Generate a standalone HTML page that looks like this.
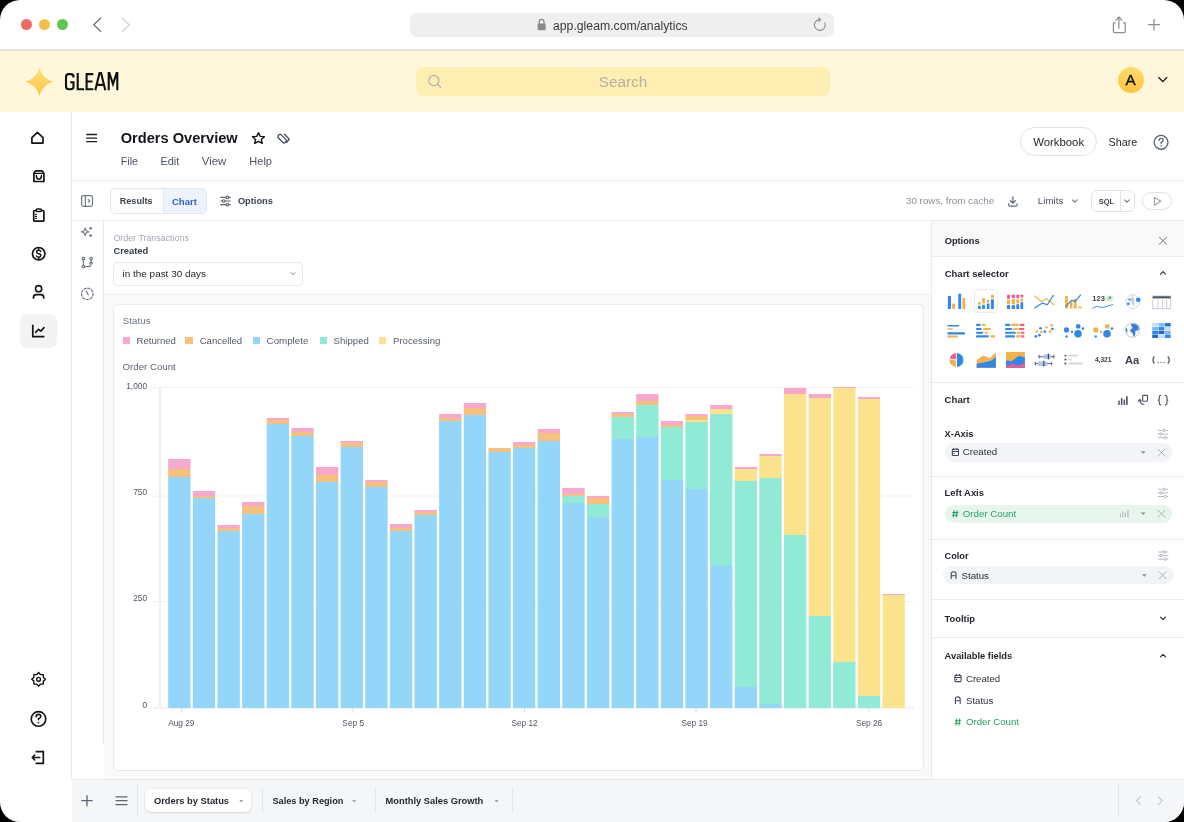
<!DOCTYPE html>
<html><head><meta charset="utf-8">
<style>
html,body{margin:0;padding:0;width:1184px;height:822px;overflow:hidden;background:#000;}
#app{position:absolute;left:0;top:0;width:1184px;height:822px;border-radius:20px;overflow:hidden;will-change:transform;font-family:"Liberation Sans",sans-serif;}
.a{position:absolute;box-sizing:border-box;}
.t{position:absolute;white-space:pre;line-height:1;font-family:"Liberation Sans",sans-serif;}
svg.i{position:absolute;overflow:visible;}
</style></head><body>
<div id="app">
<div class="a" style="left:0;top:0;width:1184px;height:822px;background:#fff"></div>
<!-- browser chrome -->
<div class="a" style="left:0;top:49px;width:1184px;height:2px;background:#e2e2e2"></div>
<div class="a" style="left:21px;top:19.1px;width:11px;height:11px;border-radius:50%;background:#ec6a5e"></div>
<div class="a" style="left:38.8px;top:19.1px;width:11px;height:11px;border-radius:50%;background:#f4bf4f"></div>
<div class="a" style="left:56.7px;top:19.1px;width:11px;height:11px;border-radius:50%;background:#61c554"></div>
<svg class="i" style="left:0;top:0" width="1" height="1">
 <polyline points="101,17.8 93.8,24.8 101,31.8" fill="none" stroke="#6e6e6e" stroke-width="1.25"/>
 <polyline points="122,17.8 129.2,24.8 122,31.8" fill="none" stroke="#d2d2d2" stroke-width="1.25"/>
</svg>
<div class="a" style="left:409.5px;top:12.5px;width:424.5px;height:24.5px;border-radius:7px;background:#efefef"></div>
<svg class="i" style="left:0;top:0" width="1" height="1">
 <path d="M539.2,24 v-2.2 a2.4,2.4 0 0 1 4.8,0 v2.2" fill="none" stroke="#8a8a8a" stroke-width="1.3"/>
 <rect x="537.6" y="23.6" width="8" height="6.6" rx="1" fill="#8a8a8a"/>
 <path d="M824.6,22.5 A5.4,5.4 0 1 1 819.7,19.6" fill="none" stroke="#8f8f8f" stroke-width="1.1"/>
 <polyline points="818.2,17.7 820.6,19.6 818.6,21.9" fill="none" stroke="#8f8f8f" stroke-width="1.1"/>
 <path d="M1115.6,22.9 h-2.2 v8.6 q0,1.1 1.1,1.1 h9.6 q1.1,0 1.1,-1.1 v-8.6 h-2.2" fill="none" stroke="#8e8e8e" stroke-width="1.25" stroke-linejoin="round"/>
 <path d="M1118.9,28.2 V16.9 M1115.9,20.3 L1118.9,17 L1121.9,20.3" fill="none" stroke="#8e8e8e" stroke-width="1.25" stroke-linecap="round"/>
 <path d="M1154,19 V30.4 M1148.2,24.7 H1159.8" fill="none" stroke="#8e8e8e" stroke-width="1.3"/>
</svg>

<!-- yellow header -->
<div class="a" style="left:0;top:51px;width:1184px;height:61px;background:#fff7dc"></div>
<svg class="i" style="left:0;top:0" width="1" height="1">
 <defs><linearGradient id="sg" x1="0" y1="0" x2="0" y2="1"><stop offset="0" stop-color="#ffe27c"/><stop offset="1" stop-color="#fbc43f"/></linearGradient>
 <linearGradient id="ag" x1="0" y1="0" x2="0" y2="1"><stop offset="0" stop-color="#ffd96a"/><stop offset="1" stop-color="#ffc53a"/></linearGradient></defs>
 <path id="logostar" d="M55.00,81.80 L54.96,81.80 L54.85,81.80 L54.65,81.82 L54.39,81.84 L54.05,81.88 L53.65,81.94 L53.19,82.03 L52.67,82.15 L52.10,82.31 L51.48,82.50 L50.83,82.74 L50.15,83.02 L49.45,83.35 L48.73,83.72 L48.00,84.14 L47.27,84.61 L46.55,85.12 L45.85,85.68 L45.16,86.27 L44.50,86.90 L43.87,87.56 L43.28,88.25 L42.72,88.95 L42.21,89.67 L41.74,90.40 L41.32,91.13 L40.95,91.85 L40.62,92.55 L40.34,93.23 L40.10,93.88 L39.91,94.50 L39.75,95.07 L39.63,95.59 L39.54,96.05 L39.48,96.45 L39.44,96.79 L39.42,97.05 L39.40,97.25 L39.40,97.36 L39.40,97.40 L39.40,97.36 L39.40,97.25 L39.38,97.05 L39.36,96.79 L39.32,96.45 L39.26,96.05 L39.17,95.59 L39.05,95.07 L38.89,94.50 L38.70,93.88 L38.46,93.23 L38.18,92.55 L37.85,91.85 L37.48,91.13 L37.06,90.40 L36.59,89.67 L36.08,88.95 L35.52,88.25 L34.93,87.56 L34.30,86.90 L33.64,86.27 L32.95,85.68 L32.25,85.12 L31.53,84.61 L30.80,84.14 L30.07,83.72 L29.35,83.35 L28.65,83.02 L27.97,82.74 L27.32,82.50 L26.70,82.31 L26.13,82.15 L25.61,82.03 L25.15,81.94 L24.75,81.88 L24.41,81.84 L24.15,81.82 L23.95,81.80 L23.84,81.80 L23.80,81.80 L23.84,81.80 L23.95,81.80 L24.15,81.78 L24.41,81.76 L24.75,81.72 L25.15,81.66 L25.61,81.57 L26.13,81.45 L26.70,81.29 L27.32,81.10 L27.97,80.86 L28.65,80.58 L29.35,80.25 L30.07,79.88 L30.80,79.46 L31.53,78.99 L32.25,78.48 L32.95,77.92 L33.64,77.33 L34.30,76.70 L34.93,76.04 L35.52,75.35 L36.08,74.65 L36.59,73.93 L37.06,73.20 L37.48,72.47 L37.85,71.75 L38.18,71.05 L38.46,70.37 L38.70,69.72 L38.89,69.10 L39.05,68.53 L39.17,68.01 L39.26,67.55 L39.32,67.15 L39.36,66.81 L39.38,66.55 L39.40,66.35 L39.40,66.24 L39.40,66.20 L39.40,66.24 L39.40,66.35 L39.42,66.55 L39.44,66.81 L39.48,67.15 L39.54,67.55 L39.63,68.01 L39.75,68.53 L39.91,69.10 L40.10,69.72 L40.34,70.37 L40.62,71.05 L40.95,71.75 L41.32,72.47 L41.74,73.20 L42.21,73.93 L42.72,74.65 L43.28,75.35 L43.87,76.04 L44.50,76.70 L45.16,77.33 L45.85,77.92 L46.55,78.48 L47.27,78.99 L48.00,79.46 L48.73,79.88 L49.45,80.25 L50.15,80.58 L50.83,80.86 L51.48,81.10 L52.10,81.29 L52.67,81.45 L53.19,81.57 L53.65,81.66 L54.05,81.72 L54.39,81.76 L54.65,81.78 L54.85,81.80 L54.96,81.80 Z" fill="url(#sg)"/>
</svg>
<svg class="i" style="left:0;top:0" width="1" height="1"><g fill="none" stroke="#111" stroke-width="2.1" stroke-linejoin="miter">
 <path d="M73.5,77.6 V76.8 Q73.5,74.1 70.8,74.1 H68.7 Q66,74.1 66,76.8 V86.5 Q66,89.2 68.7,89.2 H70.8 Q73.5,89.2 73.5,86.5 V82.2 H70.2"/>
 <path d="M77.7,73.1 V89.2 H84.1"/>
 <path d="M93.3,74.1 H86.6 V89.2 H93.3 M86.6,81.5 H92.5"/>
 <path d="M95.3,90.2 L99.5,73.1 H101.1 L105.3,90.2 M96.7,84.9 H103.9"/>
 <path d="M108.7,90.2 V73.1 H109.4 L113,84.2 L116.6,73.1 H117.3 V90.2"/>
</g></svg>
<div class="a" style="left:416px;top:67px;width:414px;height:28.7px;border-radius:8px;background:#ffeeb1"></div>
<svg class="i" style="left:0;top:0" width="1" height="1">
 <circle cx="433.8" cy="80.6" r="5.1" fill="none" stroke="#a9abb6" stroke-width="1.1"/>
 <path d="M437.6,84.4 L440.6,87.4" stroke="#a9abb6" stroke-width="1.2" stroke-linecap="round"/>
</svg>
<div class="a" style="left:1118.2px;top:66.5px;width:26px;height:26px;border-radius:50%;background:linear-gradient(#ffdb6c,#ffc53a)"></div>
<div class="t" style="left:1117.5px;width:26px;text-align:center;top:71.5px;font-size:15.2px;color:#111;-webkit-text-stroke:0.4px #111">A</div>
<svg class="i" style="left:0;top:0" width="1" height="1">
 <polyline points="1158.4,77.2 1162.8,81.6 1167.2,77.2" fill="none" stroke="#222" stroke-width="1.4"/>
</svg>

<!-- left nav -->
<div class="a" style="left:71px;top:112px;width:1px;height:667px;background:#e8eaf0"></div>
<div class="a" style="left:20px;top:314px;width:37px;height:34px;border-radius:7px;background:#f3f3f4"></div>

<!-- main header -->
<div class="a" style="left:72px;top:180px;width:1112px;height:1px;background:#e8eaf0"></div>
<div class="a" style="left:1020px;top:127px;width:77px;height:28.6px;border-radius:14.3px;border:1px solid #dfe2e8;background:#fff"></div>

<!-- toolbar -->
<div class="a" style="left:72px;top:220px;width:1112px;height:1px;background:#eceef3"></div>
<div class="a" style="left:110px;top:188.4px;width:97px;height:25.6px;border-radius:5px;border:1px solid #e3e6ec;background:#fff;overflow:hidden">
 <div class="a" style="left:52px;top:0;width:44px;height:24px;background:#eef4fd;border-left:1px solid #e3e6ec"></div>
</div>
<div class="a" style="left:1091px;top:190.2px;width:44px;height:21.8px;border-radius:6px;border:1px solid #dfe2e8;background:#fff">
 <div class="a" style="left:27.5px;top:0;width:1px;height:19.8px;background:#dfe2e8"></div>
</div>
<div class="a" style="left:1141.5px;top:192.2px;width:30.5px;height:18.3px;border-radius:9.2px;border:1px solid #dfe2e8;background:#fff"></div>

<!-- small sidebar -->
<div class="a" style="left:103px;top:221px;width:1px;height:524px;background:#e8eaf0"></div>

<!-- filter -->
<div class="a" style="left:104px;top:294px;width:827px;height:1px;background:#eceef3"></div>
<div class="a" style="left:113.4px;top:261.9px;width:190.1px;height:23.8px;border-radius:4px;border:1px solid #e7e9ee;background:#fff"></div>

<!-- content area -->
<div class="a" style="left:104px;top:295px;width:827px;height:484px;background:#f9f9fa"></div>
<div class="a" style="left:112.5px;top:304px;width:811px;height:466.5px;border-radius:5px;border:1px solid #e8eaef;background:#fff"></div>
<svg class="i" style="left:0;top:0" width="1" height="1">
 <g stroke="#f1f1f3" stroke-width="1">
  <line x1="153" y1="387.6" x2="914" y2="387.6"/>
  <line x1="153" y1="496.1" x2="914" y2="496.1"/>
  <line x1="153" y1="601.6" x2="914" y2="601.6"/>
 </g>
 <line x1="160" y1="387.6" x2="160" y2="707.5" stroke="#eceef2" stroke-width="1.6"/>
 <line x1="153" y1="707.9" x2="914" y2="707.9" stroke="#e3e6ec" stroke-width="1"/>
 <rect x="168.20" y="459" width="22.35" height="10" fill="#f6a9cc"/><rect x="168.20" y="469" width="22.35" height="8" fill="#f5c17c"/><rect x="168.20" y="477" width="22.35" height="231" fill="#93d6fa"/><rect x="192.83" y="491" width="22.35" height="5" fill="#f6a9cc"/><rect x="192.83" y="496" width="22.35" height="2" fill="#f5c17c"/><rect x="192.83" y="498" width="22.35" height="210" fill="#93d6fa"/><rect x="217.46" y="525" width="22.35" height="3" fill="#f6a9cc"/><rect x="217.46" y="528" width="22.35" height="3" fill="#f5c17c"/><rect x="217.46" y="531" width="22.35" height="177" fill="#93d6fa"/><rect x="242.09" y="502" width="22.35" height="4" fill="#f6a9cc"/><rect x="242.09" y="506" width="22.35" height="8" fill="#f5c17c"/><rect x="242.09" y="514" width="22.35" height="194" fill="#93d6fa"/><rect x="266.72" y="418" width="22.35" height="2" fill="#f6a9cc"/><rect x="266.72" y="420" width="22.35" height="4" fill="#f5c17c"/><rect x="266.72" y="424" width="22.35" height="284" fill="#93d6fa"/><rect x="291.35" y="428" width="22.35" height="4" fill="#f6a9cc"/><rect x="291.35" y="432" width="22.35" height="4" fill="#f5c17c"/><rect x="291.35" y="436" width="22.35" height="272" fill="#93d6fa"/><rect x="315.98" y="467" width="22.35" height="8" fill="#f6a9cc"/><rect x="315.98" y="475" width="22.35" height="7" fill="#f5c17c"/><rect x="315.98" y="482" width="22.35" height="226" fill="#93d6fa"/><rect x="340.61" y="441" width="22.35" height="2" fill="#f6a9cc"/><rect x="340.61" y="443" width="22.35" height="4" fill="#f5c17c"/><rect x="340.61" y="447" width="22.35" height="261" fill="#93d6fa"/><rect x="365.24" y="480" width="22.35" height="2" fill="#f6a9cc"/><rect x="365.24" y="482" width="22.35" height="5" fill="#f5c17c"/><rect x="365.24" y="487" width="22.35" height="221" fill="#93d6fa"/><rect x="389.87" y="524" width="22.35" height="4" fill="#f6a9cc"/><rect x="389.87" y="528" width="22.35" height="3" fill="#f5c17c"/><rect x="389.87" y="531" width="22.35" height="177" fill="#93d6fa"/><rect x="414.50" y="510" width="22.35" height="2" fill="#f6a9cc"/><rect x="414.50" y="512" width="22.35" height="3" fill="#f5c17c"/><rect x="414.50" y="515" width="22.35" height="193" fill="#93d6fa"/><rect x="439.13" y="414" width="22.35" height="4" fill="#f6a9cc"/><rect x="439.13" y="418" width="22.35" height="3" fill="#f5c17c"/><rect x="439.13" y="421" width="22.35" height="287" fill="#93d6fa"/><rect x="463.76" y="403" width="22.35" height="5" fill="#f6a9cc"/><rect x="463.76" y="408" width="22.35" height="7" fill="#f5c17c"/><rect x="463.76" y="415" width="22.35" height="293" fill="#93d6fa"/><rect x="488.39" y="448" width="22.35" height="4" fill="#f5c17c"/><rect x="488.39" y="452" width="22.35" height="256" fill="#93d6fa"/><rect x="513.02" y="442" width="22.35" height="3" fill="#f6a9cc"/><rect x="513.02" y="445" width="22.35" height="3" fill="#f5c17c"/><rect x="513.02" y="448" width="22.35" height="260" fill="#93d6fa"/><rect x="537.65" y="429" width="22.35" height="4" fill="#f6a9cc"/><rect x="537.65" y="433" width="22.35" height="8" fill="#f5c17c"/><rect x="537.65" y="441" width="22.35" height="267" fill="#93d6fa"/><rect x="562.28" y="488" width="22.35" height="6" fill="#f6a9cc"/><rect x="562.28" y="494" width="22.35" height="2" fill="#f5c17c"/><rect x="562.28" y="496" width="22.35" height="7" fill="#90ead6"/><rect x="562.28" y="503" width="22.35" height="205" fill="#93d6fa"/><rect x="586.91" y="496" width="22.35" height="2" fill="#f6a9cc"/><rect x="586.91" y="498" width="22.35" height="6" fill="#f5c17c"/><rect x="586.91" y="504" width="22.35" height="13" fill="#90ead6"/><rect x="586.91" y="517" width="22.35" height="191" fill="#93d6fa"/><rect x="611.54" y="412" width="22.35" height="2" fill="#f6a9cc"/><rect x="611.54" y="414" width="22.35" height="3" fill="#f5c17c"/><rect x="611.54" y="417" width="22.35" height="22" fill="#90ead6"/><rect x="611.54" y="439" width="22.35" height="269" fill="#93d6fa"/><rect x="636.17" y="394" width="22.35" height="7" fill="#f6a9cc"/><rect x="636.17" y="401" width="22.35" height="4" fill="#f5c17c"/><rect x="636.17" y="405" width="22.35" height="32" fill="#90ead6"/><rect x="636.17" y="437" width="22.35" height="271" fill="#93d6fa"/><rect x="660.80" y="421" width="22.35" height="4" fill="#f6a9cc"/><rect x="660.80" y="425" width="22.35" height="2" fill="#f5c17c"/><rect x="660.80" y="427" width="22.35" height="53" fill="#90ead6"/><rect x="660.80" y="480" width="22.35" height="228" fill="#93d6fa"/><rect x="685.43" y="414" width="22.35" height="2" fill="#f6a9cc"/><rect x="685.43" y="416" width="22.35" height="4" fill="#f5c17c"/><rect x="685.43" y="420" width="22.35" height="2" fill="#fbe38e"/><rect x="685.43" y="422" width="22.35" height="67" fill="#90ead6"/><rect x="685.43" y="489" width="22.35" height="219" fill="#93d6fa"/><rect x="710.06" y="405" width="22.35" height="4" fill="#f6a9cc"/><rect x="710.06" y="409" width="22.35" height="5" fill="#fbe38e"/><rect x="710.06" y="414" width="22.35" height="152" fill="#90ead6"/><rect x="710.06" y="566" width="22.35" height="142" fill="#93d6fa"/><rect x="734.69" y="467" width="22.35" height="2" fill="#f6a9cc"/><rect x="734.69" y="469" width="22.35" height="12" fill="#fbe38e"/><rect x="734.69" y="481" width="22.35" height="206" fill="#90ead6"/><rect x="734.69" y="687" width="22.35" height="21" fill="#93d6fa"/><rect x="759.32" y="454" width="22.35" height="2" fill="#f6a9cc"/><rect x="759.32" y="456" width="22.35" height="22" fill="#fbe38e"/><rect x="759.32" y="478" width="22.35" height="226" fill="#90ead6"/><rect x="759.32" y="704" width="22.35" height="4" fill="#93d6fa"/><rect x="783.95" y="388" width="22.35" height="6" fill="#f6a9cc"/><rect x="783.95" y="394" width="22.35" height="141" fill="#fbe38e"/><rect x="783.95" y="535" width="22.35" height="173" fill="#90ead6"/><rect x="808.58" y="394" width="22.35" height="4" fill="#f6a9cc"/><rect x="808.58" y="398" width="22.35" height="218" fill="#fbe38e"/><rect x="808.58" y="616" width="22.35" height="92" fill="#90ead6"/><rect x="833.21" y="387" width="22.35" height="1" fill="#f6a9cc"/><rect x="833.21" y="388" width="22.35" height="274" fill="#fbe38e"/><rect x="833.21" y="662" width="22.35" height="46" fill="#90ead6"/><rect x="857.84" y="397" width="22.35" height="2" fill="#f6a9cc"/><rect x="857.84" y="399" width="22.35" height="297" fill="#fbe38e"/><rect x="857.84" y="696" width="22.35" height="12" fill="#90ead6"/><rect x="882.47" y="594" width="22.35" height="1" fill="#f6a9cc"/><rect x="882.47" y="595" width="22.35" height="113" fill="#fbe38e"/>
 <g stroke="#d5d9e0" stroke-width="1">
  <line x1="181.5" y1="708" x2="181.5" y2="712"/>
  <line x1="353" y1="708" x2="353" y2="712"/>
  <line x1="524.5" y1="708" x2="524.5" y2="712"/>
  <line x1="696" y1="708" x2="696" y2="712"/>
  <line x1="869" y1="708" x2="869" y2="712"/>
 </g>
</svg>
<div class="a" style="left:122.6px;top:337.3px;width:7.4px;height:7.2px;background:#f6a9cc"></div>
<div class="a" style="left:185.4px;top:337.3px;width:7.4px;height:7.2px;background:#f5c17c"></div>
<div class="a" style="left:252.8px;top:337.3px;width:7.4px;height:7.2px;background:#93d6fa"></div>
<div class="a" style="left:319.8px;top:337.3px;width:7.4px;height:7.2px;background:#90ead6"></div>
<div class="a" style="left:379px;top:337.3px;width:7.4px;height:7.2px;background:#fbe38e"></div>

<div class="t" style="right:1037px;top:381.94px;font-size:8.3px;color:#4f5562">1,000</div>
<div class="t" style="right:1037px;top:488.34px;font-size:8.3px;color:#4f5562">750</div>
<div class="t" style="right:1037px;top:594.25px;font-size:8.3px;color:#4f5562">250</div>
<div class="t" style="right:1037px;top:701.35px;font-size:8.3px;color:#4f5562">0</div>
<div class="t" style="left:141.3px;width:80px;text-align:center;top:718.75px;font-size:8.3px;color:#4f5562">Aug 29</div>
<div class="t" style="left:313.2px;width:80px;text-align:center;top:718.75px;font-size:8.3px;color:#4f5562">Sep 5</div>
<div class="t" style="left:484.6px;width:80px;text-align:center;top:718.75px;font-size:8.3px;color:#4f5562">Sep 12</div>
<div class="t" style="left:654.6px;width:80px;text-align:center;top:718.75px;font-size:8.3px;color:#4f5562">Sep 19</div>
<div class="t" style="left:829.1px;width:80px;text-align:center;top:718.75px;font-size:8.3px;color:#4f5562">Sep 26</div>

<!-- right panel -->
<div class="a" style="left:931px;top:221px;width:1px;height:558px;background:#e8eaf0"></div>
<div class="a" style="left:932px;top:221px;width:252px;height:36px;background:#f9f9fa;border-bottom:1px solid #e8eaf0"></div>
<div class="a" style="left:974px;top:289.4px;width:24px;height:24px;border-radius:4px;border:1px solid #eaecf0;background:#fff"></div>
<div class="a" style="left:932px;top:381.5px;width:252px;height:1px;background:#e8eaf0"></div>
<div class="a" style="left:932px;top:476px;width:252px;height:1px;background:#e8eaf0"></div>
<div class="a" style="left:932px;top:539px;width:252px;height:1px;background:#e8eaf0"></div>
<div class="a" style="left:932px;top:599px;width:252px;height:1px;background:#e8eaf0"></div>
<div class="a" style="left:932px;top:637px;width:252px;height:1px;background:#e8eaf0"></div>
<div class="a" style="left:944.6px;top:443.4px;width:227.4px;height:18.4px;border-radius:9.2px;background:#f3f4f7"></div>
<div class="a" style="left:944.6px;top:504.7px;width:227.4px;height:18.2px;border-radius:9px;background:#e7f6ec"></div>
<div class="a" style="left:943.3px;top:566.1px;width:230.4px;height:18.4px;border-radius:9.2px;background:#f3f4f7"></div>
<svg class="i" style="left:0;top:0" width="1" height="1"><rect x="947.88" y="295.95" width="3.07" height="13.14" rx="0.4" fill="#2f87e6"/><rect x="952.26" y="303.61" width="2.74" height="5.47" rx="0.4" fill="#f3b14c"/><rect x="958.29" y="293.76" width="2.85" height="15.33" rx="0.4" fill="#2f87e6"/><rect x="962.45" y="297.92" width="2.74" height="11.17" rx="0.4" fill="#f3b14c"/><rect x="978.1" y="305.8" width="2.63" height="3.28" rx="0.4" fill="#2f87e6"/><rect x="978.1" y="301.97" width="2.63" height="2.74" rx="0.4" fill="#f3b14c"/><rect x="982.15" y="304.71" width="2.74" height="4.38" rx="0.4" fill="#2f87e6"/><rect x="982.15" y="297.92" width="2.74" height="5.69" rx="0.4" fill="#f3b14c"/><rect x="986.86" y="303.61" width="2.63" height="5.47" rx="0.4" fill="#2f87e6"/><rect x="986.86" y="300.11" width="2.63" height="2.41" rx="0.4" fill="#f3b14c"/><rect x="990.91" y="299.23" width="2.96" height="9.85" rx="0.4" fill="#2f87e6"/><rect x="990.91" y="294.64" width="2.96" height="3.5" rx="0.4" fill="#f3b14c"/><rect x="1007.01" y="294.85" width="3.07" height="3.83" rx="0.4" fill="#f25a8c"/><rect x="1007.01" y="299.78" width="3.07" height="4.38" rx="0.4" fill="#f3b14c"/><rect x="1007.01" y="304.93" width="3.07" height="4.16" rx="0.4" fill="#2f87e6"/><rect x="1011.72" y="294.85" width="3.28" height="3.07" rx="0.4" fill="#f25a8c"/><rect x="1011.72" y="299.02" width="3.28" height="5.47" rx="0.4" fill="#f3b14c"/><rect x="1011.72" y="305.26" width="3.28" height="3.83" rx="0.4" fill="#2f87e6"/><rect x="1016.32" y="294.85" width="2.85" height="3.5" rx="0.4" fill="#f25a8c"/><rect x="1016.32" y="299.45" width="2.85" height="3.94" rx="0.4" fill="#f3b14c"/><rect x="1016.32" y="304.16" width="2.85" height="4.93" rx="0.4" fill="#2f87e6"/><rect x="1020.48" y="294.85" width="2.74" height="2.74" rx="0.4" fill="#f25a8c"/><rect x="1020.48" y="298.69" width="2.74" height="2.74" rx="0.4" fill="#f3b14c"/><rect x="1020.48" y="302.19" width="2.74" height="6.9" rx="0.4" fill="#2f87e6"/><polyline points="1034.71,295.95 1041.28,301.42 1046.76,298.69 1053.87,304.71" fill="none" stroke="#f3b14c" stroke-width="1.2" stroke-linejoin="round" stroke-linecap="round"/><polyline points="1034.71,307.99 1042.38,303.07 1047.3,304.71 1053.33,295.4" fill="none" stroke="#2f87e6" stroke-width="1.2" stroke-linejoin="round" stroke-linecap="round"/><rect x="947.45" y="324.96" width="11.72" height="1.64" rx="0.4" fill="#2f87e6"/><rect x="947.45" y="328.25" width="5.47" height="1.42" rx="0.4" fill="#f3b14c"/><rect x="947.45" y="332.3" width="17.52" height="2.19" rx="0.4" fill="#2f87e6"/><rect x="947.45" y="335.59" width="10.4" height="1.97" rx="0.4" fill="#f3b14c"/><rect x="976.13" y="323.87" width="4.38" height="2.19" rx="0.4" fill="#2f87e6"/><rect x="981.94" y="323.87" width="3.5" height="2.19" rx="0.4" fill="#f3b14c"/><rect x="976.13" y="328.03" width="5.47" height="1.86" rx="0.4" fill="#2f87e6"/><rect x="983.03" y="328.03" width="7.66" height="1.86" rx="0.4" fill="#f3b14c"/><rect x="976.13" y="331.86" width="6.9" height="1.86" rx="0.4" fill="#2f87e6"/><rect x="984.67" y="331.86" width="3.28" height="1.86" rx="0.4" fill="#f3b14c"/><rect x="976.13" y="335.37" width="12.59" height="2.19" rx="0.4" fill="#2f87e6"/><rect x="990.37" y="335.37" width="4.71" height="2.19" rx="0.4" fill="#f3b14c"/><rect x="1005.15" y="323.87" width="4.93" height="2.19" rx="0.4" fill="#2f87e6"/><rect x="1011.17" y="323.87" width="7.66" height="2.19" rx="0.4" fill="#f3b14c"/><rect x="1019.93" y="323.87" width="4.38" height="2.19" rx="0.4" fill="#f25a8c"/><rect x="1005.15" y="328.03" width="6.9" height="1.86" rx="0.4" fill="#2f87e6"/><rect x="1013.14" y="328.03" width="4.82" height="1.86" rx="0.4" fill="#f3b14c"/><rect x="1018.83" y="328.03" width="5.47" height="1.86" rx="0.4" fill="#f25a8c"/><rect x="1005.15" y="331.86" width="10.4" height="1.86" rx="0.4" fill="#2f87e6"/><rect x="1016.65" y="331.86" width="3.07" height="1.86" rx="0.4" fill="#f3b14c"/><rect x="1020.81" y="331.86" width="3.5" height="1.86" rx="0.4" fill="#f25a8c"/><rect x="1005.15" y="335.37" width="9.85" height="2.19" rx="0.4" fill="#2f87e6"/><rect x="1016.1" y="335.37" width="4.38" height="2.19" rx="0.4" fill="#f3b14c"/><rect x="1021.24" y="335.37" width="3.07" height="2.19" rx="0.4" fill="#f25a8c"/><circle cx="1035.81" cy="336.46" r="1.35" fill="#2f87e6"/><circle cx="1039.42" cy="335.15" r="1.35" fill="#2f87e6"/><circle cx="1040.51" cy="328.25" r="1.35" fill="#2f87e6"/><circle cx="1036.9" cy="331.53" r="1.35" fill="#f3b14c"/><circle cx="1041.28" cy="332.08" r="1.35" fill="#f3b14c"/><circle cx="1044.89" cy="331.53" r="1.35" fill="#2f87e6"/><circle cx="1046.43" cy="327.48" r="1.35" fill="#f3b14c"/><circle cx="1050.04" cy="331.53" r="1.35" fill="#f3b14c"/><circle cx="1051.68" cy="325.29" r="1.35" fill="#f3b14c"/><circle cx="1052.45" cy="329.02" r="1.35" fill="#2f87e6"/><path d="M956.42,353.0 A7.0,7.0 0 0 1 956.42,367.0 Z" fill="#2f87e6"/><path d="M956.42,367.0 A7.0,7.0 0 0 1 949.52,358.81 L956.42,360.0 Z" fill="#f3b14c"/><path d="M949.52,358.81 A7.0,7.0 0 0 1 956.42,353.0 L956.42,360.0 Z" fill="#f25a8c"/><path d="M956.42,352.5 V367.5 M956.42,360.0 L949.07,358.74" stroke="#fff" stroke-width="0.9"/><polygon points="976.68,360.0 983.25,355.62 989.82,358.14 995.84,352.34 995.84,367.67 976.68,367.67" fill="#f3b14c"/><polygon points="976.68,363.83 987.08,361.65 992.01,360.33 995.84,356.72 995.84,367.67 976.68,367.67" fill="#2f87e6"/><rect x="1006.02" y="352.01" width="18.83" height="15.66" rx="0" fill="#f3b14c"/><polygon points="1006.02,360.55 1011.72,361.1 1018.62,355.95 1024.86,357.27 1024.86,367.67 1006.02,367.67" fill="#2f87e6"/><polygon points="1006.02,366.57 1012.27,363.83 1018.29,365.81 1024.86,362.96 1024.86,367.67 1006.02,367.67" fill="#f25a8c"/><polyline points="1039.09,356.72 1053.87,356.72" fill="none" stroke="#5a6170" stroke-width="1.0" stroke-linejoin="round" stroke-linecap="round"/><polyline points="1039.09,355.29 1039.09,358.14" fill="none" stroke="#5a6170" stroke-width="1.0" stroke-linejoin="round" stroke-linecap="round"/><polyline points="1053.87,355.29 1053.87,358.14" fill="none" stroke="#5a6170" stroke-width="1.0" stroke-linejoin="round" stroke-linecap="round"/><rect x="1043.8" y="354.2" width="7.01" height="4.71" rx="0.4" fill="#a9c9f5"/><polyline points="1048.4,354.2 1048.4,358.91" fill="none" stroke="#3d4450" stroke-width="1.2" stroke-linejoin="round" stroke-linecap="round"/><polyline points="1035.26,363.62 1051.68,363.62" fill="none" stroke="#5a6170" stroke-width="1.0" stroke-linejoin="round" stroke-linecap="round"/><polyline points="1035.26,362.19 1035.26,365.04" fill="none" stroke="#5a6170" stroke-width="1.0" stroke-linejoin="round" stroke-linecap="round"/><polyline points="1051.68,362.19 1051.68,365.04" fill="none" stroke="#5a6170" stroke-width="1.0" stroke-linejoin="round" stroke-linecap="round"/><rect x="1038.0" y="361.43" width="9.31" height="4.6" rx="0.4" fill="#a9c9f5"/><polyline points="1043.8,361.43 1043.8,366.02" fill="none" stroke="#3d4450" stroke-width="1.2" stroke-linejoin="round" stroke-linecap="round"/><rect x="1065.07" y="295.95" width="2.85" height="12.59" rx="0.4" fill="#f3b14c"/><rect x="1069.78" y="301.42" width="2.74" height="7.12" rx="0.4" fill="#f3b14c"/><rect x="1073.83" y="298.69" width="2.85" height="9.85" rx="0.4" fill="#f3b14c"/><rect x="1078.54" y="306.35" width="2.96" height="2.19" rx="0.4" fill="#f3b14c"/><polyline points="1065.95,306.35 1071.42,300.33 1075.26,301.42 1080.4,295.07" fill="none" stroke="#2f87e6" stroke-width="1.2" stroke-linejoin="round" stroke-linecap="round"/><text x="1092.23" y="301.42" font-family="Liberation Sans" font-weight="700" font-size="7.6" fill="#3d4450">123</text><rect x="1105.15" y="295.4" width="8.4" height="6.2" rx="3.1" fill="#d9f1de"/><path d="M1107.89,299.56 L1110.62,297.04 M1108.87,297.04 H1110.62 V298.8" stroke="#2e8b4e" stroke-width="0.9" fill="none"/><polyline points="1092.78,308.21 1096.61,306.35 1100.99,307.45 1105.37,306.9 1108.65,305.8 1112.81,304.49" fill="none" stroke="#2f87e6" stroke-width="0.9" stroke-linejoin="round" stroke-linecap="round"/><circle cx="1132.74" cy="301.64" r="6.9" fill="#fff" stroke="#cdd1d8" stroke-width="0.9"/><path d="M1131.74,296.14 q2,1 3,3 q-1,2 0,4 q-1,2 -1,3.5 q-2,-2 -2,-4 q-1.5,-1 -2,-3 z" fill="#cdd1d8"/><circle cx="1138.21" cy="299.78" r="2.3" fill="#2f87e6"/><circle cx="1129.46" cy="299.45" r="1.1" fill="#2f87e6"/><circle cx="1128.36" cy="303.83" r="1.4" fill="#2f87e6"/><rect x="1152.78" y="295.95" width="17.9" height="12.6" fill="none" stroke="#cdd1d8" stroke-width="1.1"/><rect x="1152.78" y="296.28" width="17.9" height="2.1" fill="#4b5260"/><rect x="1157.38" y="298.69" width="1" height="10.5" fill="#cdd1d8"/><rect x="1161.76" y="298.69" width="1" height="10.5" fill="#cdd1d8"/><rect x="1166.14" y="298.69" width="1" height="10.5" fill="#cdd1d8"/><circle cx="1066.5" cy="329.89" r="2.6" fill="#2f87e6"/><circle cx="1071.97" cy="331.86" r="1.2" fill="#2f87e6"/><circle cx="1078.21" cy="326.39" r="2.3" fill="#2f87e6"/><circle cx="1077.99" cy="333.72" r="3.8" fill="#2f87e6"/><circle cx="1082.92" cy="328.58" r="1.3" fill="#2f87e6"/><circle cx="1066.5" cy="336.46" r="1.2" fill="#2f87e6"/><circle cx="1095.73" cy="329.89" r="2.6" fill="#f3b14c"/><circle cx="1101.21" cy="331.86" r="1.3" fill="#f3b14c"/><circle cx="1107.34" cy="326.39" r="2.3" fill="#f3b14c"/><circle cx="1107.01" cy="333.72" r="3.8" fill="#2f87e6"/><circle cx="1111.94" cy="328.58" r="1.3" fill="#2f87e6"/><circle cx="1095.73" cy="336.46" r="1.2" fill="#2f87e6"/><circle cx="1132.19" cy="330.11" r="7.1" fill="#fff" stroke="#b8c2d0" stroke-width="0.9"/><path d="M1125.5900000000001,328.61 q1.5,-1 1.8,1 q-0.5,2 0.5,4 q-2,-1 -2.3,-5 z M1130.69,324.31 q3,-1.5 7,1 q1.5,3 0.5,5.5 q-1.5,-1 -3,0.5 q1,3 -1,5.5 q-1.5,-1 -1.5,-3.5 q-2.5,-0.5 -2.5,-3 q0.5,-2 2.5,-2 q-1,-1.5 -2,-4 z" fill="#3a7fd6"/><path d="M1134.69,323.31 A7.1,7.1 0 0 1 1139.29,330.11" stroke="#8db8ee" stroke-width="1.2" fill="none"/><rect x="1152.2" y="323.1" width="5.9" height="3.4" fill="#c5defa"/><rect x="1158.5" y="323.1" width="5.9" height="3.4" fill="#7eb6f2"/><rect x="1164.8" y="323.1" width="5.9" height="3.4" fill="#2f6fc8"/><rect x="1152.2" y="326.92" width="5.9" height="3.4" fill="#7eb6f2"/><rect x="1158.5" y="326.92" width="5.9" height="3.4" fill="#2f87e6"/><rect x="1164.8" y="326.92" width="5.9" height="3.4" fill="#c5defa"/><rect x="1152.2" y="330.74" width="5.9" height="3.4" fill="#2f87e6"/><rect x="1158.5" y="330.74" width="5.9" height="3.4" fill="#2568bd"/><rect x="1164.8" y="330.74" width="5.9" height="3.4" fill="#7eb6f2"/><rect x="1152.2" y="334.56" width="5.9" height="3.4" fill="#2568bd"/><rect x="1158.5" y="334.56" width="5.9" height="3.4" fill="#c5defa"/><rect x="1164.8" y="334.56" width="5.9" height="3.4" fill="#2f87e6"/><circle cx="1065.4" cy="355.62" r="0.95" fill="#3d4450"/><rect x="1068.36" y="354.64" width="9.64" height="1.97" rx="0.9" fill="#d3d6dc"/><circle cx="1065.4" cy="359.46" r="0.95" fill="#3d4450"/><rect x="1068.36" y="358.47" width="3.61" height="1.97" rx="0.9" fill="#d3d6dc"/><circle cx="1065.4" cy="363.51" r="0.95" fill="#3d4450"/><rect x="1068.36" y="362.52" width="14.02" height="1.97" rx="0.9" fill="#d3d6dc"/><text x="1094.96" y="361.65" font-family="Liberation Sans, sans-serif" font-weight="700" font-size="6.6" fill="#3d4450">4,321</text><text x="1125.08" y="364.05" font-family="Liberation Sans" font-weight="700" font-size="11.6" fill="#3d4450" textLength="14.2" lengthAdjust="spacingAndGlyphs">Aa</text><path d="M1154.6,356.9 Q1153.2,356.9 1153.2,358.3 V359.3 Q1153.2,360 1152.4,360 Q1153.2,360 1153.2,360.7 V361.7 Q1153.2,363.1 1154.6,363.1 M1167.6,356.9 Q1169,356.9 1169,358.3 V359.3 Q1169,360 1169.8,360 Q1169,360 1169,360.7 V361.7 Q1169,363.1 1167.6,363.1" fill="none" stroke="#3d4450" stroke-width="1.15"/><circle cx="1158.1" cy="362.3" r="0.65" fill="#3d4450"/><circle cx="1161.1" cy="362.3" r="0.65" fill="#3d4450"/><circle cx="1164.1" cy="362.3" r="0.65" fill="#3d4450"/></svg><svg class="i" style="left:0;top:0" width="1" height="1">
 <g fill="none" stroke="#6b7280" stroke-width="1" stroke-linecap="round">
  <path d="M1159.3,237.1 L1166.5,244.3 M1166.5,237.1 L1159.3,244.3"/>
 </g>
 <g fill="none" stroke="#2a2f38" stroke-width="1.2" stroke-linecap="round" stroke-linejoin="round">
  <path d="M1160.5,274.1 L1163,271.6 L1165.5,274.1"/>
  <path d="M1160.5,656.8 L1163,654.3 L1165.5,656.8"/>
  <path d="M1160.5,617.2 L1163,619.7 L1165.5,617.2"/>
 </g>
 <!-- chart section icons -->
 <g fill="#4b5260">
  <rect x="1118.3" y="400.6" width="1.5" height="4.3"/>
  <rect x="1120.9" y="398.1" width="1.5" height="6.8"/>
  <rect x="1123.6" y="399.6" width="1.5" height="5.3"/>
  <rect x="1126.1" y="396.2" width="1.6" height="8.7"/>
 </g>
 <g fill="none" stroke="#4b5260" stroke-width="1.1" stroke-linejoin="round" stroke-linecap="round">
  <rect x="1142.7" y="395.4" width="4.8" height="5.8" rx="0.6"/>
  <path d="M1139.9,400.2 Q1140.6,404.2 1142.6,404.2 H1143.9"/>
  <path d="M1138.6,401.3 L1139.8,399.4 L1141.2,401.1"/>
  <path d="M1160.9,395.3 Q1159.3,395.3 1159.3,396.8 V398.8 Q1159.3,400 1158.3,400.1 Q1159.3,400.2 1159.3,401.4 V403.4 Q1159.3,404.9 1160.9,404.9"/>
  <path d="M1165.3,395.3 Q1166.9,395.3 1166.9,396.8 V398.8 Q1166.9,400 1167.9,400.1 Q1166.9,400.2 1166.9,401.4 V403.4 Q1166.9,404.9 1165.3,404.9"/>
 </g>
 <!-- sliders -->
 <g id="sl" fill="none" stroke="#b2b7c0" stroke-width="0.95" stroke-linecap="round">
  <path d="M1158.4,430.4 H1167.8 M1158.4,434 H1167.8 M1158.4,437.6 H1167.8"/>
 </g>
 <g fill="#fff" stroke="#b2b7c0" stroke-width="1">
  <circle cx="1163.9" cy="430.4" r="1.2"/><circle cx="1161" cy="434" r="1.2"/><circle cx="1165.3" cy="437.6" r="1.2"/>
 </g>
 <g fill="none" stroke="#b2b7c0" stroke-width="0.95" stroke-linecap="round">
  <path d="M1158.4,489.3 H1167.8 M1158.4,492.9 H1167.8 M1158.4,496.5 H1167.8"/>
  <path d="M1158.4,552 H1167.8 M1158.4,555.6 H1167.8 M1158.4,559.2 H1167.8"/>
 </g>
 <g fill="#fff" stroke="#b2b7c0" stroke-width="1">
  <circle cx="1163.9" cy="489.3" r="1.2"/><circle cx="1161" cy="492.9" r="1.2"/><circle cx="1165.3" cy="496.5" r="1.2"/>
  <circle cx="1163.9" cy="552" r="1.2"/><circle cx="1161" cy="555.6" r="1.2"/><circle cx="1165.3" cy="559.2" r="1.2"/>
 </g>
 <!-- pill triangles & X -->
 <g fill="#8c929c">
  <path d="M1140.6,451.3 H1145.6 L1143.1,453.8 Z"/>
  <path d="M1140.6,512.6 H1145.6 L1143.1,515.1 Z"/>
  <path d="M1141.9,574.2 H1146.9 L1144.4,576.7 Z"/>
 </g>
 <g fill="none" stroke="#a7adb7" stroke-width="0.95" stroke-linecap="round">
  <path d="M1158,449.1 L1165,456.1 M1165,449.1 L1158,456.1"/>
  <path d="M1158,510.2 L1165,517.2 M1165,510.2 L1158,517.2"/>
  <path d="M1159.2,571.8 L1166.2,578.8 M1166.2,571.8 L1159.2,578.8"/>
 </g>
 <g fill="#b5bac3">
  <rect x="1119.9" y="513.4" width="1.2" height="3.9"/>
  <rect x="1122.3" y="511.3" width="1.2" height="6"/>
  <rect x="1124.8" y="512.6" width="1.2" height="4.7"/>
  <rect x="1127.3" y="509.9" width="1.3" height="7.4"/>
 </g>
 <!-- field type icons -->
 <g fill="none" stroke="#3d4450" stroke-width="1.05" stroke-linejoin="round">
  <rect x="952.3" y="449.3" width="6.2" height="6.3" rx="0.9"/>
  <path d="M952.3,451.5 H958.5 M953.7,448.1 v1.6 M956.9,448.1 v1.6 M953.3,453.4 h1.3"/>
  <rect x="954.9" y="675.3" width="6.2" height="6.3" rx="0.9"/>
  <path d="M954.9,677.5 H961.1 M956.3,674.1 v1.6 M959.5,674.1 v1.6 M955.9,679.4 h1.3"/>
  <path d="M951.2,578.9 V574.2 Q951.2,571.8 953.6,571.8 Q956,571.8 956,574.2 V578.9 M951.2,575.7 H956"/>
  <path d="M955.4,703.9 V699.2 Q955.4,696.8 957.8,696.8 Q960.2,696.8 960.2,699.2 V703.9 M955.4,700.7 H960.2"/>
 </g>
 <g fill="none" stroke="#23a067" stroke-width="1.05">
  <path d="M954.2,510.4 L953.3,517.4 M957.2,510.4 L956.3,517.4 M952.4,512.6 H958.4 M952,515.2 H958"/>
  <path d="M956.8,718.5 L955.9,725.5 M959.8,718.5 L958.9,725.5 M955,720.7 H961 M954.6,723.3 H960.6"/>
 </g>
</svg>


<!-- bottom bar -->
<div class="a" style="left:72px;top:779px;width:1112px;height:43px;background:#f5f6f8;border-top:1px solid #e6e8ee"></div>
<div class="a" style="left:145.1px;top:789.1px;width:106.3px;height:23.3px;border-radius:6px;background:#fff;box-shadow:0 1px 2px rgba(0,0,0,0.12),0 0 0 0.5px rgba(0,0,0,0.04)"></div>
<div class="a" style="left:137.3px;top:784.3px;width:1px;height:33px;background:#e2e4ea"></div>
<div class="a" style="left:262.3px;top:789px;width:1px;height:23.5px;background:#e2e4ea"></div>
<div class="a" style="left:375px;top:789px;width:1px;height:23.5px;background:#e2e4ea"></div>
<div class="a" style="left:512.3px;top:789px;width:1px;height:23.5px;background:#e2e4ea"></div>
<div class="a" style="left:1118px;top:784.3px;width:1px;height:33px;background:#e2e4ea"></div>
<svg class="i" style="left:0;top:0" width="1" height="1">
 <g fill="none" stroke="#5d6472" stroke-width="1.3" stroke-linecap="round">
  <path d="M87,795.6 V805.8 M81.9,800.7 H92.1"/>
  <path d="M116,796.8 H127 M116,800.7 H127 M116,804.6 H127"/>
 </g>
 <g fill="#8a909b">
  <path d="M239.2,800.2 H243.4 L241.3,802.3 Z"/>
  <path d="M352,800.2 H356.2 L354.1,802.3 Z"/>
  <path d="M494.5,800.2 H498.7 L496.6,802.3 Z"/>
 </g>
 <g fill="none" stroke="#c3c7ce" stroke-width="1.2" stroke-linecap="round" stroke-linejoin="round">
  <path d="M1140.4,796.8 L1136.6,800.7 L1140.4,804.6"/>
  <path d="M1158.3,796.8 L1162.1,800.7 L1158.3,804.6"/>
 </g>
</svg>


<svg class="i" style="left:0;top:0" width="1" height="1">
 <g fill="none" stroke="#141414" stroke-width="1.7" stroke-linejoin="round" stroke-linecap="round">
  <path d="M31.9,143.1 V137.6 L37.4,132.3 L43,137.6 V143.1 Z"/>
  <path d="M33.9,181.5 V173.6 L35.1,171.4 Q35.6,170.9 36.3,170.9 H41.5 Q42.2,170.9 42.7,171.4 L43.9,173.6 V181.5 Z" stroke-linejoin="miter"/>
  <path d="M33.9,173.4 H43.9" stroke-width="1.4"/>
  <path d="M36.3,175.6 Q36.5,179.1 38.9,179.1 Q41.3,179.1 41.5,175.6" stroke-width="1.5"/>
  <rect x="33.7" y="210.5" width="10.2" height="10.7" rx="1"/>
  <rect x="36.2" y="208.9" width="5.2" height="2.5" rx="1" fill="#fff" stroke-width="1.5"/>
  <circle cx="38.7" cy="253.7" r="6.2"/>
  <path d="M40.8,251.4 Q40.4,250.3 38.7,250.3 Q36.6,250.3 36.6,252 Q36.6,253.5 38.7,253.7 Q40.8,253.9 40.8,255.5 Q40.8,257.1 38.7,257.1 Q37,257.1 36.5,256 M38.7,248.7 V250.3 M38.7,257.1 V258.7" stroke-width="1.45"/>
  <circle cx="38.6" cy="288.7" r="3.1" stroke-width="1.6"/>
  <path d="M33.5,298.8 V297.2 Q33.5,294.7 36.5,294.7 H40.7 Q43.7,294.7 43.7,297.2 V298.8" stroke-linecap="butt"/>
  <path d="M32.8,324.8 V336.6 H44.4" stroke-linecap="butt" stroke-linejoin="miter"/>
  <path d="M35.6,332.4 L38.6,329.3 L40.8,331.1 L44,327.6" stroke-width="1.6"/>
  <circle cx="38.6" cy="679.3" r="1.9" stroke-width="1.4"/>
  <path d="M38.6,672.4 L40.4,674.5 L43.3,674.6 L43.4,677.5 L45.5,679.3 L43.4,681.1 L43.3,684 L40.4,684.1 L38.6,686.2 L36.8,684.1 L33.9,684 L33.8,681.1 L31.7,679.3 L33.8,677.5 L33.9,674.6 L36.8,674.5 Z" stroke-width="1.4"/>
  <circle cx="38.5" cy="718.9" r="7.3" stroke-width="1.6"/>
  <path d="M36.2,716.8 Q36.2,714.4 38.5,714.4 Q40.8,714.4 40.8,716.5 Q40.8,718 38.5,718.8 V719.8" stroke-width="1.6"/>
  <circle cx="38.5" cy="722.6" r="0.3" fill="#141414" stroke-width="1.3"/>
  <path d="M35.6,751.6 H43.3 V763.4 H35.6" stroke-linejoin="miter" stroke-linecap="butt"/>
  <path d="M39.8,757.5 H32.2 M34.6,755.1 L32.2,757.5 L34.6,759.9" stroke-width="1.6"/>
 </g>
 <g stroke="#141414" stroke-width="1.3" stroke-linecap="round">
  <path d="M35.6,214.3 h0.9 M35.6,216.4 h0.9 M35.6,218.4 h0.9" stroke-width="1.2"/>
 </g>
 <!-- main hamburger -->
 <g stroke="#1a1d23" stroke-width="1.4">
  <path d="M86.2,134.5 H97 M86.2,138.1 H97 M86.2,141.6 H97"/>
 </g>
 <!-- star / tag -->
 <path d="M258.5,132.6 L260.3,136.4 L264.4,136.7 L261.3,139.5 L262.3,143.4 L258.5,141.3 L254.6,143.4 L255.6,139.5 L252.5,136.7 L256.7,136.4 Z" fill="none" stroke="#111" stroke-width="1.35" stroke-linejoin="round"/>
 <g fill="none" stroke="#3d4450" stroke-width="1.25" stroke-linejoin="round" stroke-linecap="round">
  <path d="M278.6,135.2 Q279.4,134.3 280.7,134.4 L286.1,139.6 Q286.9,140.5 286.1,141.4 L284.9,142.6 Q284,143.4 283.1,142.6 L278,137.5 Q277.8,136.1 278.6,135.2 Z"/>
  <path d="M284.5,134.2 L289.2,139.1 L286.5,142.6"/>
 </g>
 <!-- header help -->
 <circle cx="1161.1" cy="142.3" r="6.9" fill="none" stroke="#5b6376" stroke-width="1.35"/>
 <path d="M1159.1,140.5 Q1159.1,138.3 1161.1,138.3 Q1163.2,138.3 1163.2,140.2 Q1163.2,141.6 1161.1,142.3 V143.2" fill="none" stroke="#5b6376" stroke-width="1.35" stroke-linecap="round"/>
 <circle cx="1161.1" cy="145.8" r="0.8" fill="#5b6376"/>
 <!-- small sidebar icons -->
 <g fill="none" stroke="#737a87" stroke-width="1.2" stroke-linejoin="round" stroke-linecap="round">
  <rect x="81.6" y="195.7" width="10.9" height="10.7" rx="1.8"/>
  <path d="M85.4,195.7 V206.4"/>
  <path d="M88.3,199.6 L89.8,201 L88.3,202.4"/>
  <path d="M85.2,228 Q85.6,231.5 89,231.9 Q85.6,232.3 85.2,235.8 Q84.8,232.3 81.4,231.9 Q84.8,231.5 85.2,228 Z"/>
  <circle cx="90.6" cy="228.3" r="0.8" fill="#737a87"/>
  <circle cx="90.6" cy="235.6" r="0.8" fill="#737a87"/>
  <circle cx="83.4" cy="258.6" r="1.3"/>
  <circle cx="83.4" cy="266.6" r="1.3"/>
  <circle cx="91.1" cy="258.6" r="1.3"/>
  <path d="M83.4,260 V265.2 M84.8,266.6 H88.5 Q91.1,266.6 91.1,263.6 V260"/>
  <path d="M89.6,263.4 L91.1,261.9 L92.6,263.4"/>
  <circle cx="87.3" cy="293.9" r="5.7" stroke-dasharray="2.2 1.6"/>
  <path d="M86.3,291.2 L88.2,294.6"/>
 </g>
 <!-- toolbar icons -->
 <g fill="none" stroke="#5b6270" stroke-width="1.2" stroke-linecap="round">
  <path d="M220.8,197.4 H230.2 M220.8,201 H230.2 M220.8,204.6 H230.2"/>
 </g>
 <g fill="#fff" stroke="#5b6270" stroke-width="1.1">
  <circle cx="227.3" cy="197.4" r="1.3"/>
  <circle cx="223.6" cy="201" r="1.3"/>
  <circle cx="227.3" cy="204.6" r="1.3"/>
 </g>
 <g fill="none" stroke="#6b7280" stroke-width="1.3" stroke-linecap="round" stroke-linejoin="round">
  <path d="M1012.9,196.8 V203.2 M1010.4,200.8 L1012.9,203.3 L1015.4,200.8"/><path d="M1008.7,203.6 V204.9 Q1008.7,206.2 1010,206.2 H1015.8 Q1017.1,206.2 1017.1,204.9 V203.6" stroke-width="1.2"/>
  <path d="M1072.4,199.8 L1074.8,202.2 L1077.2,199.8" stroke-width="1.1"/>
  <path d="M1124.6,199.9 L1126.9,202.2 L1129.2,199.9" stroke-width="1.1"/>
 </g>
 <path d="M1154.4,197.4 L1160.8,201.3 L1154.4,205.2 Z" fill="none" stroke="#9aa0ab" stroke-width="1.1" stroke-linejoin="round"/>
 <!-- filter chevron -->
 <path d="M290.9,272.4 L293.1,274.6 L295.3,272.4" fill="none" stroke="#6b7280" stroke-width="1"/>
</svg>

<div style="position:absolute;left:0;top:0;width:1184px;height:822px;will-change:transform">
<div class="t" style="left:553px;top:19.60px;font-size:12.24px;color:#3b3b3b;">app.gleam.com/analytics</div>
<div class="t" style="left:598.7px;top:73.96px;font-size:15.34px;color:#b4b0a6;">Search</div>
<div class="t" style="left:120.75px;top:131.18px;font-size:14.61px;color:#111418;font-weight:700;">Orders Overview</div>
<div class="t" style="left:120.75px;top:156.07px;font-size:10.74px;color:#4b5160;">File</div>
<div class="t" style="left:160.5px;top:155.93px;font-size:10.91px;color:#4b5160;">Edit</div>
<div class="t" style="left:201.8px;top:155.51px;font-size:11.4px;color:#4b5160;">View</div>
<div class="t" style="left:249.3px;top:155.82px;font-size:11.04px;color:#4b5160;">Help</div>
<div class="t" style="left:1033.3px;top:136.67px;font-size:11.33px;color:#1d2128;">Workbook</div>
<div class="t" style="left:1108.5px;top:137.16px;font-size:10.75px;color:#1d2128;">Share</div>
<div class="t" style="left:119.8px;top:197.01px;font-size:9.05px;color:#3d4350;font-weight:700;">Results</div>
<div class="t" style="left:172px;top:196.60px;font-size:9.53px;color:#2f63c2;font-weight:700;">Chart</div>
<div class="t" style="left:237.9px;top:196.80px;font-size:9.29px;color:#3d4350;font-weight:700;">Options</div>
<div class="t" style="left:906px;top:196.06px;font-size:9.81px;color:#8b909b;">30 rows, from cache</div>
<div class="t" style="left:1037.8px;top:196.07px;font-size:9.8px;color:#4b5160;">Limits</div>
<div class="t" style="left:1098.8px;top:198.03px;font-size:7.49px;color:#3d4350;font-weight:700;">SQL</div>
<div class="t" style="left:113.4px;top:233.84px;font-size:8.9px;color:#a3a8b3;">Order Transactions</div>
<div class="t" style="left:113.4px;top:246.84px;font-size:9.37px;color:#353b46;font-weight:700;">Created</div>
<div class="t" style="left:122.6px;top:268.56px;font-size:9.93px;color:#1d2128;">in the past 30 days</div>
<div class="t" style="left:122.7px;top:316.14px;font-size:9.6px;color:#687080;letter-spacing:0.114px;">Status</div>
<div class="t" style="left:136.5px;top:336.46px;font-size:9.58px;color:#545a68;">Returned</div>
<div class="t" style="left:199.7px;top:336.47px;font-size:9.56px;color:#545a68;">Cancelled</div>
<div class="t" style="left:266.6px;top:336.31px;font-size:9.75px;color:#545a68;">Complete</div>
<div class="t" style="left:333.6px;top:336.42px;font-size:9.62px;color:#545a68;">Shipped</div>
<div class="t" style="left:393px;top:336.46px;font-size:9.58px;color:#545a68;">Processing</div>
<div class="t" style="left:122.5px;top:362.06px;font-size:9.7px;color:#5f6573;">Order Count</div>
<div class="t" style="left:944.7px;top:236.63px;font-size:9.26px;color:#1d2128;font-weight:700;">Options</div>
<div class="t" style="left:944.7px;top:268.60px;font-size:9.53px;color:#1d2128;font-weight:700;">Chart selector</div>
<div class="t" style="left:944.6px;top:395.33px;font-size:9.61px;color:#1d2128;font-weight:700;">Chart</div>
<div class="t" style="left:944.6px;top:430.10px;font-size:9.29px;color:#1d2128;font-weight:700;">X-Axis</div>
<div class="t" style="left:962.8px;top:447.38px;font-size:9.67px;color:#2a2f38;">Created</div>
<div class="t" style="left:944.6px;top:488.10px;font-size:9.41px;color:#1d2128;font-weight:700;">Left Axis</div>
<div class="t" style="left:962.8px;top:509.36px;font-size:9.7px;color:#23a067;">Order Count</div>
<div class="t" style="left:944.6px;top:551.59px;font-size:9.19px;color:#1d2128;font-weight:700;">Color</div>
<div class="t" style="left:961.5px;top:570.75px;font-size:9.7px;color:#2a2f38;">Status</div>
<div class="t" style="left:944.6px;top:614.57px;font-size:9.33px;color:#1d2128;font-weight:700;">Tooltip</div>
<div class="t" style="left:944.6px;top:652.06px;font-size:9.34px;color:#1d2128;font-weight:700;">Available fields</div>
<div class="t" style="left:966px;top:674.13px;font-size:9.61px;color:#2a2f38;">Created</div>
<div class="t" style="left:966px;top:695.61px;font-size:9.63px;color:#2a2f38;">Status</div>
<div class="t" style="left:966px;top:717.01px;font-size:9.63px;color:#23a067;">Order Count</div>
<div class="t" style="left:153.9px;top:797.16px;font-size:9.34px;color:#23272f;font-weight:700;">Orders by Status</div>
<div class="t" style="left:272.5px;top:797.30px;font-size:9.18px;color:#23272f;font-weight:700;">Sales by Region</div>
<div class="t" style="left:385.6px;top:797.20px;font-size:9.3px;color:#23272f;font-weight:700;">Monthly Sales Growth</div>
</div>
</div>
</body></html>
